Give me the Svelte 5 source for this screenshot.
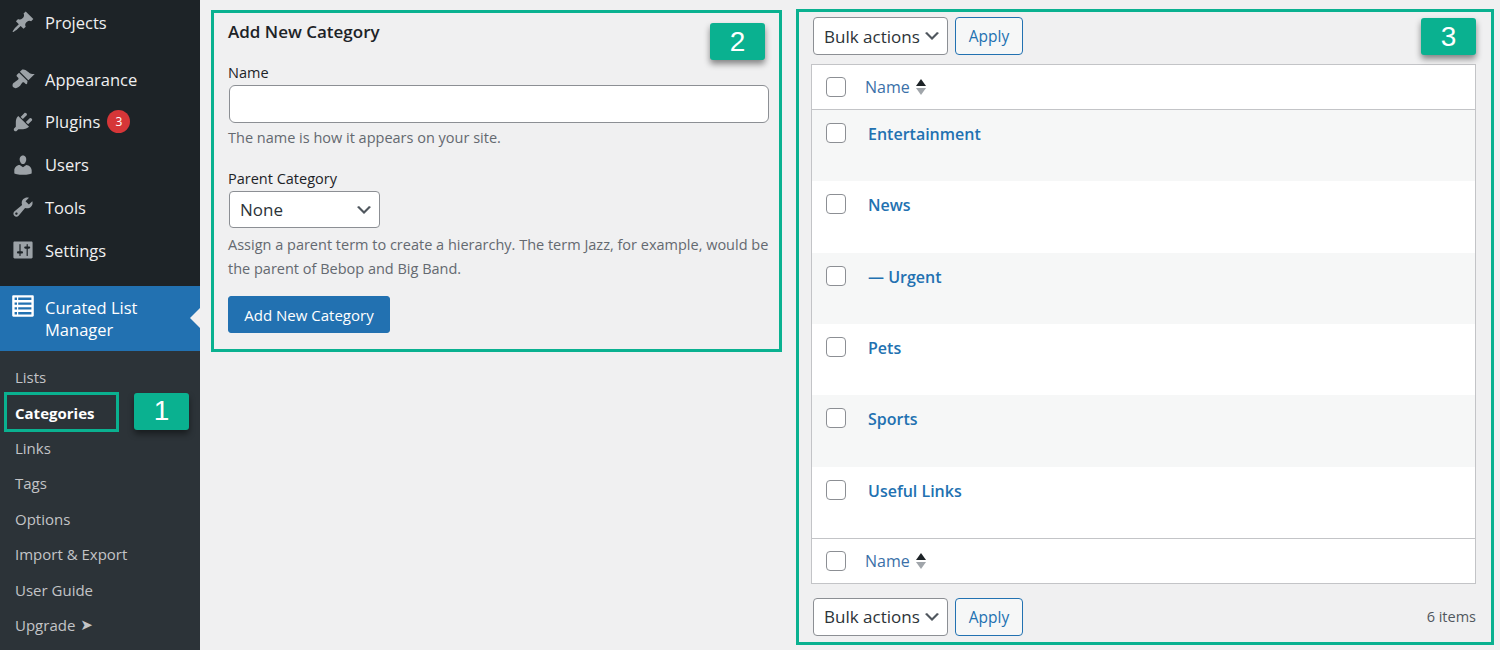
<script>
	const icons = {
		pin: 'M10.44 3.02l1.82-1.82 6.36 6.35-1.83 1.82c-1.05-.68-2.48-.57-3.41.36l-.75.75c-.92.93-1.04 2.35-.35 3.41l-1.83 1.82-2.41-2.41-2.8 2.79c-.42.42-3.38 2.71-3.8 2.29s1.86-3.39 2.28-3.81l2.79-2.79L4.1 9.36l1.83-1.82c1.05.69 2.48.57 3.4-.36l.75-.75c.93-.92 1.05-2.35.36-3.41z',
		brush: 'M14.48 11.06L7.41 3.99l1.5-1.5c.5-.56 2.3-.47 3.51.32 1.21.8 1.43 1.28 2.91 2.1 1.18.64 2.45 1.26 4.45.85zm-.71.71L6.7 4.7 4.93 6.47c-.39.39-.39 1.02 0 1.41l1.06 1.06c.39.39.39 1.03 0 1.42-.6.6-1.43 1.11-2.21 1.69-.35.26-.7.53-1.01.84C1.43 13.23.66 15.6 1.97 16.93c1.33 1.31 3.7.54 5.04-.79.31-.31.58-.66.84-1.01.58-.78 1.09-1.61 1.69-2.21.39-.39 1.03-.39 1.42 0l1.06 1.06c.39.39 1.02.39 1.41 0z',
		plug: 'M13.11 4.36L9.87 7.6 8 5.73l3.24-3.24c.35-.34 1.05-.2 1.56.32.52.51.66 1.21.31 1.55zm-8 1.77l.91-1.12 9.01 9.01-1.19.84c-.71.71-2.63 1.16-3.82 1.16H6.14L4.9 17.26c-.59.59-1.54.59-2.12 0-.59-.58-.59-1.53 0-2.12l1.24-1.24v-3.88c0-1.13.4-3.19 1.09-3.89zm7.26 3.97l3.24-3.24c.34-.35 1.04-.21 1.55.31.52.51.66 1.21.31 1.55l-3.24 3.25z',
		user: 'M10 9.25c-2.27 0-2.73-3.44-2.73-3.44C7 4.02 7.82 2 9.97 2c2.16 0 2.98 2.02 2.71 3.81 0 0-.41 3.44-2.68 3.44zm0 2.57L12.72 10c2.39 0 4.52 2.33 4.52 4.53v2.49s-3.65 1.13-7.24 1.13c-3.65 0-7.24-1.13-7.24-1.13v-2.49c0-2.25 1.94-4.48 4.47-4.48z',
		wrench: 'M16.68 9.77c-1.34 1.34-3.3 1.67-4.95.99l-5.41 6.52c-.99.99-2.59.99-3.58 0s-.99-2.59 0-3.57l6.52-5.42c-.68-1.65-.35-3.61.99-4.95 1.28-1.28 3.12-1.62 4.72-1.06l-2.89 2.89 2.82 2.82 2.86-2.87c.53 1.58.18 3.39-1.08 4.65zM3.81 16.21c.4.39 1.04.39 1.43 0 .4-.4.4-1.04 0-1.43-.39-.4-1.03-.4-1.43 0-.39.39-.39 1.03 0 1.43z',
		sliders: 'M18 16V4c0-.55-.45-1-1-1H3c-.55 0-1 .45-1 1v12c0 .55.45 1 1 1h14c.55 0 1-.45 1-1zM8 11h1c.55 0 1 .45 1 1s-.45 1-1 1H8v1.5c0 .28-.22.5-.5.5s-.5-.22-.5-.5V13H6c-.55 0-1-.45-1-1s.45-1 1-1h1V5.5c0-.28.22-.5.5-.5s.5.22.5.5V11zm5-2h-1c-.55 0-1-.45-1-1s.45-1 1-1h1V5.5c0-.28.22-.5.5-.5s.5.22.5.5V7h1c.55 0 1 .45 1 1s-.45 1-1 1h-1v5.5c0 .28-.22.5-.5.5s-.5-.22-.5-.5V9z',
		list: 'M2 1h16c.55 0 1 .45 1 1v16c0 .55-.45 1-1 1H2c-.55 0-1-.45-1-1V2c0-.55.45-1 1-1zM3 3v2h2V3zm3 0v2h11V3zM3 7v2h2V7zm3 0v2h11V7zM3 11v2h2v-2zm3 0v2h11v-2zM3 15v2h2v-2zm3 0v2h11v-2z'
	};

	const menuTop = [
		{ label: 'Projects', icon: 'pin', gap: true },
		{ label: 'Appearance', icon: 'brush' },
		{ label: 'Plugins', icon: 'plug', count: 3 },
		{ label: 'Users', icon: 'user' },
		{ label: 'Tools', icon: 'wrench' },
		{ label: 'Settings', icon: 'sliders', gap: true }
	];

	const submenu = ['Lists', 'Categories', 'Links', 'Tags', 'Options', 'Import & Export', 'User Guide', 'Upgrade'];

	const categories = ['Entertainment', 'News', '— Urgent', 'Pets', 'Sports', 'Useful Links'];
</script>

{#snippet bulk()}
	<div class="select-wrap bulk">
		<select>
			<option>Bulk actions</option>
		</select>
		<svg class="chevron" viewBox="0 0 20 20"><path d="M5 6l5 5 5-5 2 1-7 7-7-7z" /></svg>
	</div>
	<button class="apply" type="button">Apply</button>
{/snippet}

{#snippet nameCol()}
	<div class="check-cell"><input type="checkbox" /></div>
	<span class="sort-name">Name</span>
	<span class="sort-arrows"><i class="up"></i><i class="down"></i></span>
{/snippet}

<div class="page">
	<nav class="sidebar">
		<ul class="menu">
			{#each menuTop as item}
				<li class:gap={item.gap}>
					<svg class="icon" viewBox="0 0 20 20"><path fill-rule="evenodd" d={icons[item.icon]} /></svg>
					<span>{item.label}</span>
					{#if item.count}<b class="count">{item.count}</b>{/if}
				</li>
			{/each}
			<li class="current">
				<svg class="icon" viewBox="0 0 20 20"><path fill-rule="evenodd" d={icons.list} /></svg>
				<span>Curated List<br />Manager</span>
			</li>
		</ul>
		<ul class="sub">
			{#each submenu as label}
				<li class:active={label === 'Categories'}>
					{label}
					{#if label === 'Upgrade'}<span class="arrow">➤</span>{/if}
					{#if label === 'Categories'}
						<div class="outline"></div>
						<div class="tag tag-1">1</div>
					{/if}
				</li>
			{/each}
		</ul>
	</nav>

	<section class="form-col">
		<div class="tag tag-2">2</div>
		<h2>Add New Category</h2>
		<label for="cat-name">Name</label>
		<input id="cat-name" class="name-input" type="text" />
		<p class="help first">The name is how it appears on your site.</p>
		<label for="cat-parent" class="parent-label">Parent Category</label>
		<div class="select-wrap parent">
			<select id="cat-parent">
				<option>None</option>
			</select>
			<svg class="chevron" viewBox="0 0 20 20"><path d="M5 6l5 5 5-5 2 1-7 7-7-7z" /></svg>
		</div>
		<p class="help">Assign a parent term to create a hierarchy. The term Jazz, for example, would be the parent of Bebop and Big Band.</p>
		<button class="primary" type="button">Add New Category</button>
	</section>

	<section class="table-col">
		<div class="tag tag-3">3</div>
		<div class="toolbar top">
			{@render bulk()}
		</div>
		<div class="table">
			<div class="head">{@render nameCol()}</div>
			{#each categories as name}
				<div class="row">
					<div class="check-cell"><input type="checkbox" /></div>
					<a href="#top">{name}</a>
				</div>
			{/each}
			<div class="foot">{@render nameCol()}</div>
		</div>
		<div class="toolbar bottom">
			{@render bulk()}
			<span class="total">6 items</span>
		</div>
	</section>
</div>

<style>
	:global(body) {
		background: #f0f0f1;
		overflow: hidden;
	}

	.page {
		display: flex;
		align-items: flex-start;
		width: 1500px;
		height: 650px;
		font-family: 'Open Sans', 'Noto Sans', sans-serif;
		font-size: 15.5px;
		color: #2c3338;
	}

	ul {
		list-style: none;
		margin: 0;
		padding: 0;
	}

	/* left admin menu */
	.sidebar {
		flex: 0 0 200px;
		height: 650px;
		background: #2c3338;
	}

	.menu {
		background: #1d2327;
		padding-top: 1px;
		color: #f0f0f1;
		font-size: 16.5px;
	}

	.menu li {
		display: flex;
		align-items: center;
		height: 42.75px;
		padding-left: 11px;
	}

	.menu li.gap {
		margin-bottom: 14px;
	}

	.icon {
		flex: none;
		width: 24px;
		height: 24px;
		margin-right: 10px;
		fill: #9ca2a7;
	}

	.count {
		display: flex;
		align-items: center;
		justify-content: center;
		width: 23px;
		height: 23px;
		margin-left: 7px;
		border-radius: 50%;
		background: #d63638;
		color: #fff;
		font-size: 12px;
		font-weight: 400;
	}

	.menu li.current {
		position: relative;
		align-items: flex-start;
		height: 65px;
		padding-top: 11px;
		box-sizing: border-box;
		background: #2271b1;
		color: #fff;
		line-height: 22px;
	}

	.current .icon {
		fill: #fff;
		margin-top: -3px;
	}

	.current::after {
		content: '';
		position: absolute;
		right: 0;
		top: 22px;
		border: 10px solid transparent;
		border-left: 0;
		border-right-color: #f0f0f1;
	}

	.sub {
		padding-top: 9px;
		color: #c3c4c7;
		font-size: 15px;
	}

	.sub li {
		position: relative;
		display: flex;
		align-items: center;
		gap: 5px;
		height: 35.4px;
		padding-left: 15px;
	}

	.sub li.active {
		color: #fff;
		font-weight: 700;
	}

	.arrow {
		font-family: 'DejaVu Sans', sans-serif;
		font-size: 15px;
	}

	.outline {
		position: absolute;
		left: 4px;
		top: -3px;
		width: 115px;
		height: 40px;
		box-sizing: border-box;
		border: 3px solid #0ab190;
	}

	/* numbered callouts */
	.tag {
		position: absolute;
		display: flex;
		align-items: center;
		justify-content: center;
		width: 55px;
		height: 37px;
		border-radius: 3px;
		background: #0ab190;
		box-shadow: 0 4px 6px rgba(0, 0, 0, 0.45);
		color: #fff;
		font-family: 'Liberation Sans', sans-serif;
		font-size: 28px;
		font-weight: 400;
	}

	.tag-1 {
		left: 134px;
		top: -2px;
	}

	.tag-2 {
		right: 14px;
		top: 10px;
	}

	.tag-3 {
		right: 15px;
		top: 6px;
	}

	/* add form */
	.form-col {
		position: relative;
		flex: 0 0 571px;
		height: 342px;
		box-sizing: border-box;
		margin: 10px 0 0 11px;
		padding: 7px 10px 0 14px;
		border: 3px solid #0ab190;
		display: flex;
		flex-direction: column;
		align-items: flex-start;
	}

	h2 {
		margin: 0 0 19px;
		font-size: 17px;
		font-weight: 600;
		line-height: 24px;
		color: #1d2327;
	}

	label {
		font-size: 14.5px;
		line-height: 20px;
		color: #1d2327;
	}

	.name-input {
		width: 540px;
		height: 38px;
		box-sizing: border-box;
		margin: 2px 0 0 1px;
		border: 1px solid #8c8f94;
		border-radius: 6px;
		background: #fff;
	}

	.help {
		margin: 5px 0 0;
		font-size: 14.5px;
		line-height: 24px;
		color: #646970;
	}

	.help.first {
		margin-bottom: 21px;
		line-height: 20px;
	}

	.parent-label {
		margin-bottom: 2px;
	}

	.select-wrap {
		position: relative;
		display: flex;
	}

	select {
		appearance: none;
		box-sizing: border-box;
		width: 100%;
		height: 100%;
		padding: 0 10px;
		border: 1px solid #8c8f94;
		border-radius: 4px;
		background: #fff;
		font: inherit;
		font-size: 17px;
		color: #2c3338;
	}

	.chevron {
		position: absolute;
		right: 6px;
		top: 50%;
		width: 20px;
		height: 20px;
		margin-top: -10px;
		fill: #50575e;
		pointer-events: none;
	}

	.parent {
		width: 151px;
		height: 37px;
		margin-left: 1px;
	}

	.bulk {
		width: 135px;
		height: 38px;
	}

	.primary {
		width: 162px;
		height: 37px;
		margin-top: 15px;
		padding: 0;
		border: 1px solid #2271b1;
		border-radius: 3px;
		background: #2271b1;
		font: inherit;
		font-size: 15px;
		color: #fff;
	}

	/* category table */
	.table-col {
		position: relative;
		flex: 0 0 698px;
		height: 636px;
		box-sizing: border-box;
		margin: 9px 0 0 14px;
		padding: 5px 15px 0 12px;
		border: 3px solid #0ab190;
	}

	.toolbar {
		display: flex;
		align-items: center;
		gap: 7px;
		padding-left: 2px;
	}

	.toolbar.bottom {
		margin-top: 14px;
	}

	.apply {
		width: 68px;
		height: 38px;
		padding: 0;
		border: 1px solid #2271b1;
		border-radius: 4px;
		background: #f6f7f7;
		font: inherit;
		font-size: 15.5px;
		color: #2271b1;
	}

	.total {
		margin-left: auto;
		font-size: 14.5px;
		color: #50575e;
	}

	.table {
		margin-top: 9px;
		border: 1px solid #c3c4c7;
		background: #fff;
	}

	.head,
	.foot {
		display: flex;
		align-items: center;
		height: 44px;
		box-sizing: border-box;
		color: #2271b1;
	}

	.head {
		border-bottom: 1px solid #c3c4c7;
		height: 45px;
	}

	.foot {
		border-top: 1px solid #c3c4c7;
		height: 45px;
	}

	.check-cell {
		flex: none;
		display: flex;
		width: 53px;
		padding-left: 14px;
		box-sizing: border-box;
	}

	input[type='checkbox'] {
		appearance: none;
		width: 20px;
		height: 20px;
		margin: 0;
		border: 1px solid #8c8f94;
		border-radius: 4px;
		background: #fff;
	}

	.sort-name {
		font-size: 16px;
		color: #3b70a8;
	}

	.sort-arrows {
		display: flex;
		flex-direction: column;
		gap: 2px;
		margin-left: 6px;
	}

	.sort-arrows i {
		width: 0;
		height: 0;
		border: 5px solid transparent;
		border-top: 0;
		border-bottom: 7px solid #1d2327;
	}

	.sort-arrows i.down {
		border-bottom: 0;
		border-top: 7px solid #a0a5aa;
	}

	.row {
		display: flex;
		align-items: flex-start;
		height: 71.33px;
		box-sizing: border-box;
		padding-top: 13px;
	}

	.row:nth-of-type(even) {
		background: #f6f7f7;
	}

	.row a {
		margin-left: 3px;
		font-size: 16px;
		font-weight: 600;
		line-height: 22px;
		color: #2271b1;
		text-decoration: none;
	}
</style>
